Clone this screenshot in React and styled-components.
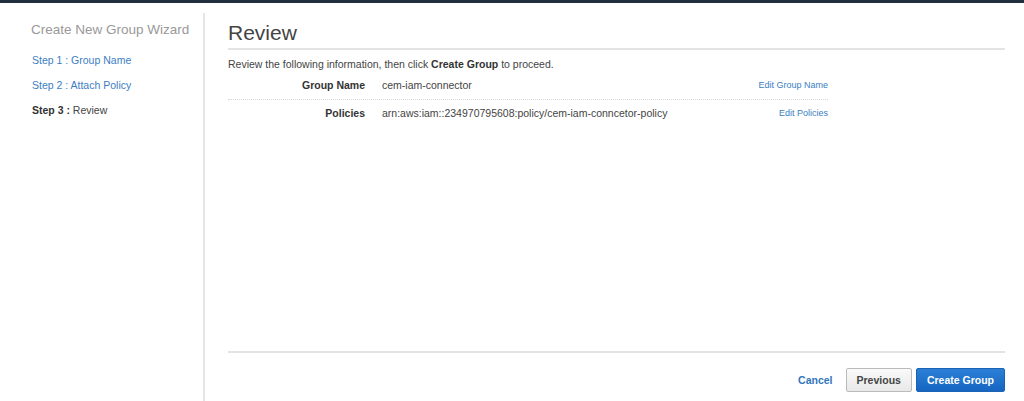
import React from 'react';
import styled, { createGlobalStyle } from 'styled-components';

const GlobalStyle = createGlobalStyle`
  html, body {
    margin: 0;
    padding: 0;
    background: #fff;
    font-family: "Liberation Sans", Arial, sans-serif;
    color: #444;
  }
`;

const TopBar = styled.div`
  height: 3px;
  background: #232f3e;
`;

const Layout = styled.div`
  display: flex;
  height: calc(100vh - 3px);
`;

const Sidebar = styled.nav`
  width: 205px;
  flex-shrink: 0;
  margin-top: 10px;
  border-right: 2px solid #e6e6e6;
  padding: 9px 0 0 31px;
  box-sizing: border-box;
`;

const WizardTitle = styled.div`
  font-size: 13.5px;
  color: #999;
  margin-bottom: 16px;
`;

const StepList = styled.ul`
  list-style: none;
  margin: 0;
  padding: 0 0 0 1px;
  display: flex;
  flex-direction: column;
  gap: 11px;
`;

const Step = styled.li`
  font-size: 10.5px;
  line-height: 14px;
  color: ${(p) => (p.$active ? '#444' : '#3b7ec2')};
  b {
    font-weight: bold;
    color: #333;
  }
`;

const Content = styled.main`
  flex: 1;
  display: flex;
  flex-direction: column;
  padding: 17px 19px 0 23px;
`;

const Heading = styled.h1`
  margin: 0;
  font-size: 21px;
  font-weight: normal;
  color: #444;
  line-height: 26px;
  padding-bottom: 2px;
  border-bottom: 2px solid #e3e3e3;
`;

const Intro = styled.p`
  margin: 8px 0 0;
  font-size: 10.5px;
  color: #444;
  b {
    color: #333;
  }
`;

const Table = styled.div`
  width: 600px;
  margin-top: 1px;
`;

const Row = styled.div`
  display: grid;
  grid-template-columns: 137px 1fr auto;
  align-items: center;
  height: ${(p) => (p.$last ? '26px' : '28px')};
  font-size: 10.5px;
  border-bottom: ${(p) => (p.$last ? 'none' : '1px dotted #d6d6d6')};
`;

const Label = styled.span`
  font-weight: bold;
  text-align: right;
  color: #333;
`;

const Value = styled.span`
  padding-left: 17px;
  color: #444;
`;

const EditLink = styled.a`
  font-size: 9px;
  color: #3b7ec2;
  text-decoration: none;
  text-align: right;
`;

const Spacer = styled.div`
  flex: 1;
`;

const Footer = styled.div`
  border-top: 2px solid #e3e3e3;
  display: flex;
  justify-content: flex-end;
  align-items: center;
  gap: 4px;
  padding: 15px 0 9px;
`;

const CancelLink = styled.a`
  font-size: 10.5px;
  font-weight: bold;
  color: #2f76bb;
  text-decoration: none;
  margin-right: 9px;
`;

const Button = styled.button`
  height: 24px;
  padding: 0 10px;
  font-family: "Liberation Sans", Arial, sans-serif;
  font-size: 10.5px;
  font-weight: bold;
  border-radius: 2px;
  cursor: pointer;
  border: 1px solid ${(p) => (p.$primary ? '#1a63b5' : '#bbb')};
  color: ${(p) => (p.$primary ? '#fff' : '#444')};
  background: ${(p) =>
    p.$primary
      ? 'linear-gradient(#2b7fd6, #1666c1)'
      : 'linear-gradient(#fafafa, #e8e8e8)'};
`;

export default function App() {
  return (
    <>
      <GlobalStyle />
      <TopBar />
      <Layout>
        <Sidebar>
          <WizardTitle>Create New Group Wizard</WizardTitle>
          <StepList>
            <Step>Step 1 : Group Name</Step>
            <Step>Step 2 : Attach Policy</Step>
            <Step $active>
              <b>Step 3 :</b> Review
            </Step>
          </StepList>
        </Sidebar>
        <Content>
          <Heading>Review</Heading>
          <Intro>
            Review the following information, then click <b>Create Group</b> to proceed.
          </Intro>
          <Table>
            <Row>
              <Label>Group Name</Label>
              <Value>cem-iam-connector</Value>
              <EditLink href="#">Edit Group Name</EditLink>
            </Row>
            <Row $last>
              <Label>Policies</Label>
              <Value>arn:aws:iam::234970795608:policy/cem-iam-conncetor-policy</Value>
              <EditLink href="#">Edit Policies</EditLink>
            </Row>
          </Table>
          <Spacer />
          <Footer>
            <CancelLink href="#">Cancel</CancelLink>
            <Button>Previous</Button>
            <Button $primary>Create Group</Button>
          </Footer>
        </Content>
      </Layout>
    </>
  );
}
